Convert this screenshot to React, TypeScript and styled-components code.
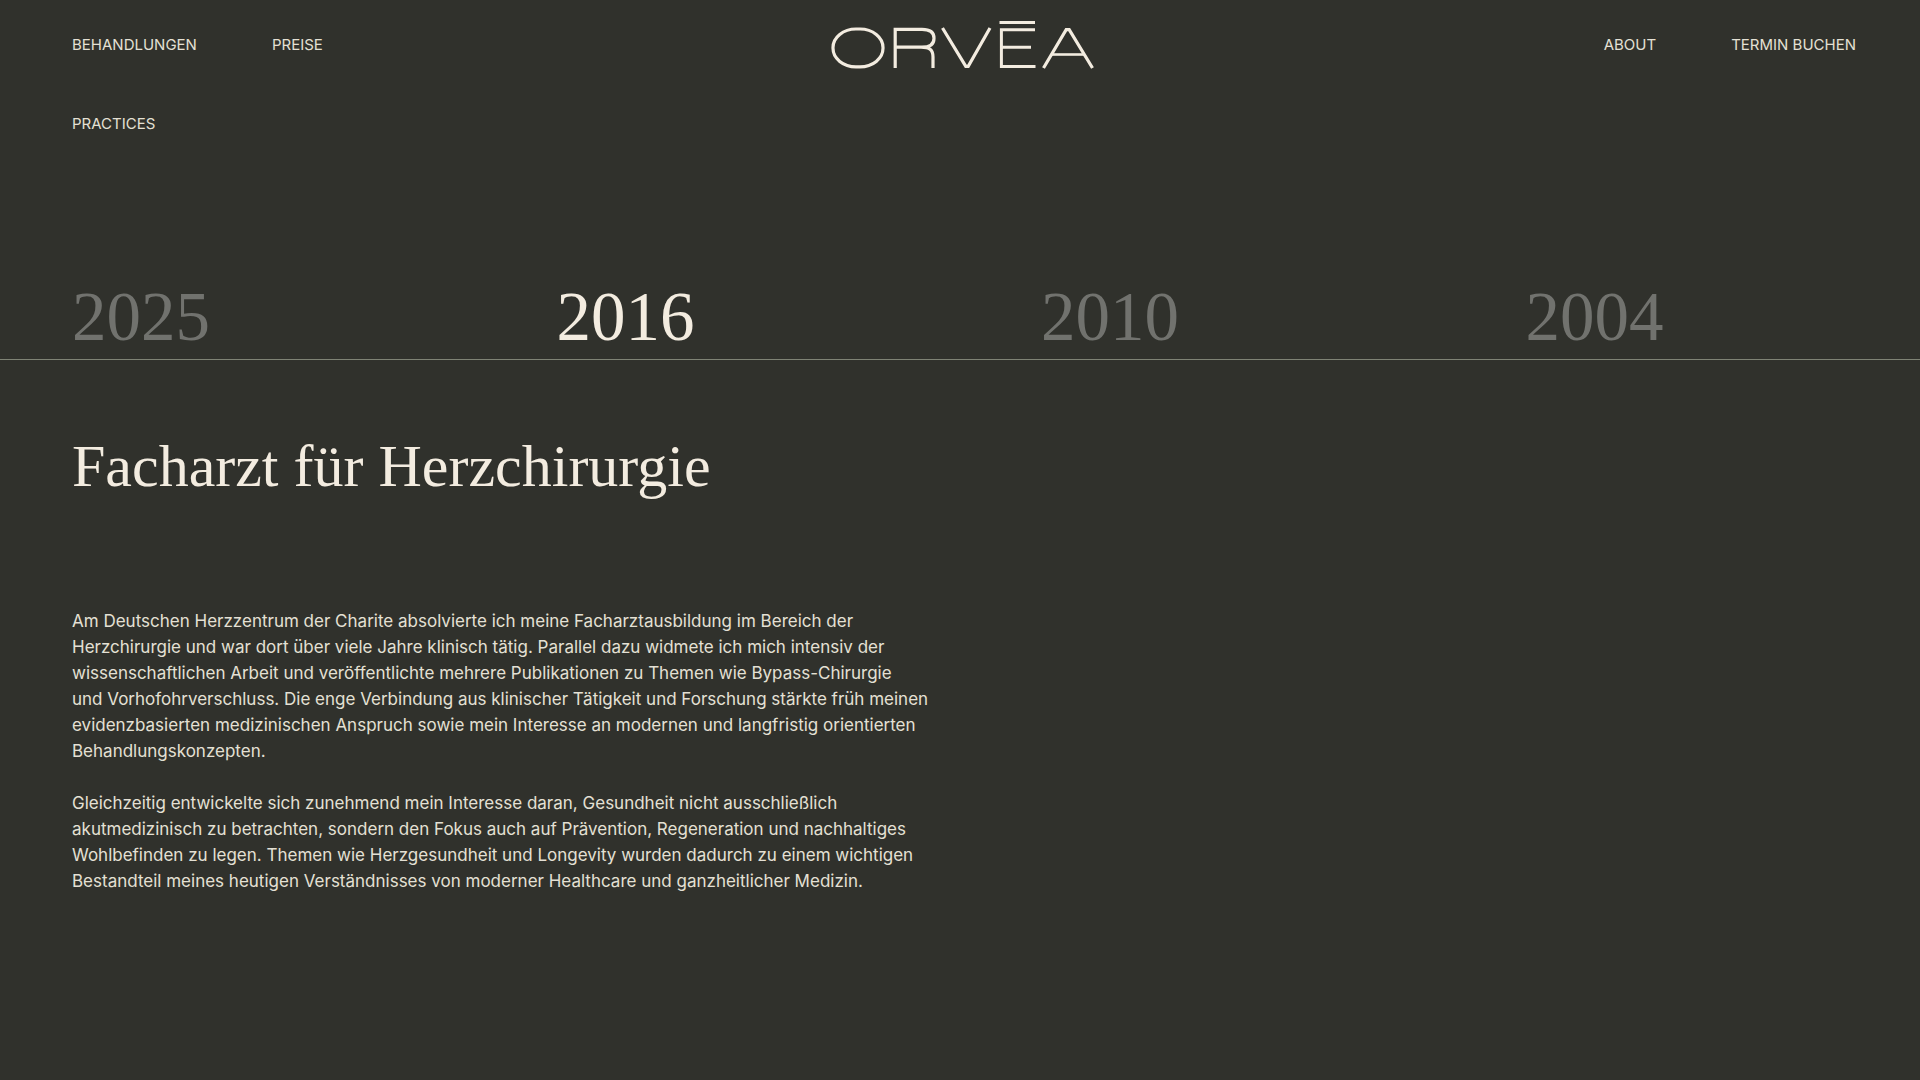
import React, { useState } from "react";
import styled, { createGlobalStyle } from "styled-components";

const colors = {
  ground: "#30312c",
  cream: "#f3ece0",
  text: "#e4e0d4",
  muted: "#71726e",
  rule: "#7f8375",
};

const sans = `Inter, "Liberation Sans", sans-serif`;
const serif = `"Liberation Serif", "Times New Roman", serif`;

const GlobalStyle = createGlobalStyle`
  *, *::before, *::after { box-sizing: border-box; }
  body {
    margin: 0;
    background: ${colors.ground};
    color: ${colors.text};
    font-family: ${sans};
  }
`;

const Header = styled.header`
  display: grid;
  grid-template-columns: 1fr auto 1fr;
  align-items: start;
  padding: 21px 64px 0 72px;
`;

const Nav = styled.nav<{ $end?: boolean }>`
  display: flex;
  flex-wrap: wrap;
  justify-content: ${(p) => (p.$end ? "flex-end" : "flex-start")};
  gap: 31px 75px;
  max-width: ${(p) => (p.$end ? "none" : "360px")};
`;

const NavLink = styled.a`
  color: ${colors.text};
  font-size: 15px;
  line-height: 48px;
  text-decoration: none;
  text-transform: uppercase;
  white-space: nowrap;
`;

const LogoLink = styled.a`
  display: block;
  line-height: 0;
`;

const Years = styled.div`
  display: grid;
  grid-template-columns: repeat(4, 1fr);
  gap: 162px;
  margin-top: 129px;
  padding: 0 72px 2px;
  border-bottom: 1px solid ${colors.rule};
`;

const YearButton = styled.button<{ $active: boolean }>`
  padding: 0;
  border: 0;
  background: none;
  color: ${(p) => (p.$active ? colors.cream : colors.muted)};
  font-family: ${serif};
  font-size: 69px;
  line-height: 80px;
  text-align: left;
  cursor: pointer;
`;

const Article = styled.main`
  padding: 70px 72px 120px;
`;

const Title = styled.h1`
  margin: 0 0 106px;
  color: ${colors.cream};
  font-family: ${serif};
  font-size: 60px;
  font-weight: 400;
  line-height: 72px;
`;

const Paragraph = styled.p`
  margin: 0 0 26px;
  font-size: 17px;
  line-height: 26px;
`;

function Logo() {
  return (
    <svg width="268" height="50" viewBox="830 21 268 50" fill="none" stroke={colors.cream} role="img" aria-label="ORVĒA">
      <rect x="833" y="29" width="50" height="37.8" rx="23" ry="18.5" strokeWidth="3.2" />
      <path d="M895.2 68V29.4H922C930 29.4 934 32 934 38.2C934 44.5 930 47.2 922 47.2H895.2M921 47.2C930 47.2 933 50 933 57V68" strokeWidth="3.2" />
      <polyline points="942.5,28 965.8,66.4 968.2,66.4 990,28" strokeWidth="3.2" />
      <path d="M1035 29.7H1001.4V66.4H1035.5M1001.4 47.2H1031M999.5 22.4H1035" strokeWidth="3" />
      <polyline points="1043.5,68 1066.2,29.6 1069.2,29.6 1092.5,68" strokeWidth="3.2" />
      <line x1="1052" y1="54.5" x2="1084" y2="54.5" strokeWidth="2.6" />
    </svg>
  );
}

const paragraphs = [
  [
    "Am Deutschen Herzzentrum der Charite absolvierte ich meine Facharztausbildung im Bereich der",
    "Herzchirurgie und war dort über viele Jahre klinisch tätig. Parallel dazu widmete ich mich intensiv der",
    "wissenschaftlichen Arbeit und veröffentlichte mehrere Publikationen zu Themen wie Bypass-Chirurgie",
    "und Vorhofohrverschluss. Die enge Verbindung aus klinischer Tätigkeit und Forschung stärkte früh meinen",
    "evidenzbasierten medizinischen Anspruch sowie mein Interesse an modernen und langfristig orientierten",
    "Behandlungskonzepten.",
  ],
  [
    "Gleichzeitig entwickelte sich zunehmend mein Interesse daran, Gesundheit nicht ausschließlich",
    "akutmedizinisch zu betrachten, sondern den Fokus auch auf Prävention, Regeneration und nachhaltiges",
    "Wohlbefinden zu legen. Themen wie Herzgesundheit und Longevity wurden dadurch zu einem wichtigen",
    "Bestandteil meines heutigen Verständnisses von moderner Healthcare und ganzheitlicher Medizin.",
  ],
];

const years = ["2025", "2016", "2010", "2004"];

export default function App() {
  const [active, setActive] = useState("2016");
  return (
    <>
      <GlobalStyle />
      <Header>
        <Nav>
          <NavLink href="#behandlungen">Behandlungen</NavLink>
          <NavLink href="#preise">Preise</NavLink>
          <NavLink href="#practices">Practices</NavLink>
        </Nav>
        <LogoLink href="#start">
          <Logo />
        </LogoLink>
        <Nav $end>
          <NavLink href="#about">About</NavLink>
          <NavLink href="#termin">Termin buchen</NavLink>
        </Nav>
      </Header>
      <Years>
        {years.map((year) => (
          <YearButton key={year} type="button" $active={year === active} onClick={() => setActive(year)}>
            {year}
          </YearButton>
        ))}
      </Years>
      <Article>
        <Title>Facharzt für Herzchirurgie</Title>
        {paragraphs.map((lines) => (
          <Paragraph key={lines[0]}>
            {lines.map((line, i) => (
              <React.Fragment key={line}>
                {i > 0 && <br />}
                {line}
              </React.Fragment>
            ))}
          </Paragraph>
        ))}
      </Article>
    </>
  );
}
